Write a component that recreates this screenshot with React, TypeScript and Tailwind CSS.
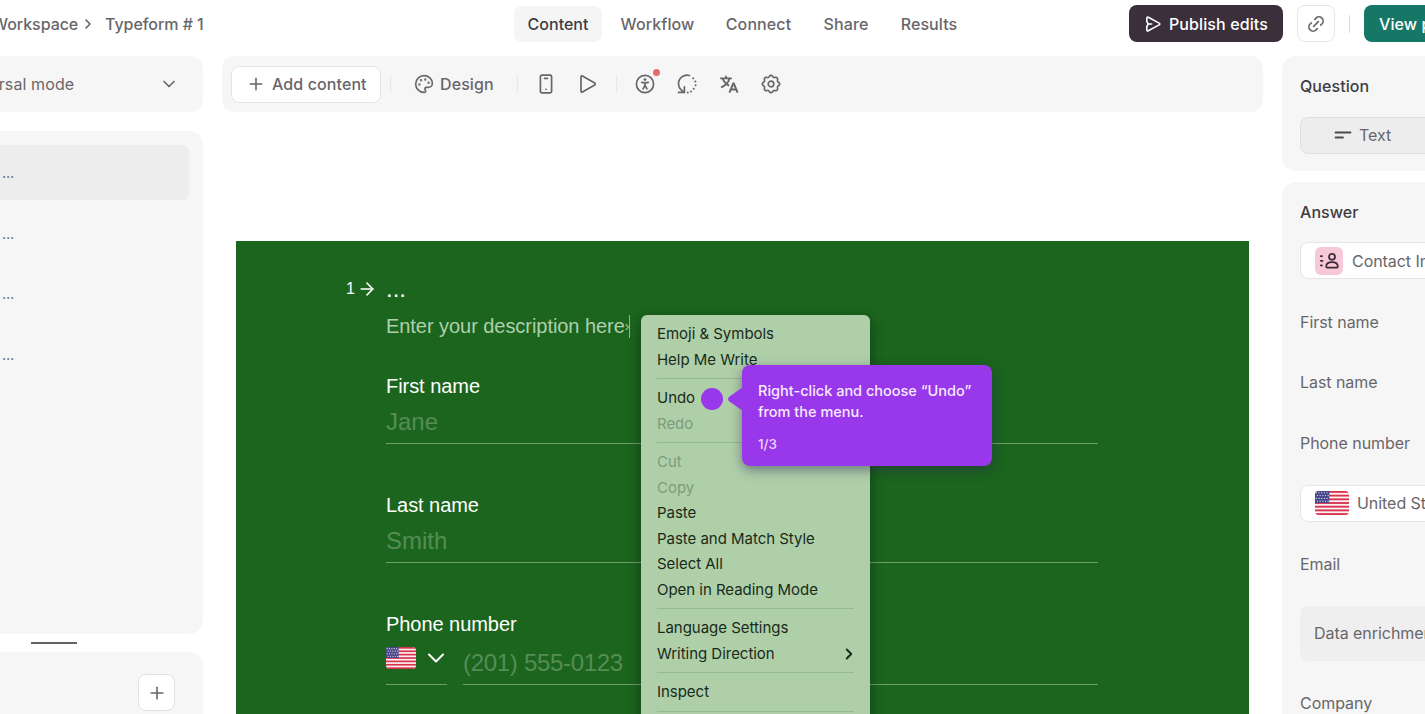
import type { ReactNode } from "react";
import { ArrowRight, ChevronDown, ChevronRight, Link2, Palette, Plus } from "lucide-react";
import { clsx } from "clsx";

const tabs = [
  { label: "Content", cls: "w-[88px]" },
  { label: "Workflow", cls: "w-[111px]" },
  { label: "Connect", cls: "w-[91px]" },
  { label: "Share", cls: "w-[84px]" },
  { label: "Results", cls: "w-[82px]" },
];

const menuGroups = [
  [{ label: "Emoji & Symbols" }, { label: "Help Me Write" }],
  [{ label: "Undo" }, { label: "Redo", disabled: true }],
  [
    { label: "Cut", disabled: true },
    { label: "Copy", disabled: true },
    { label: "Paste" },
    { label: "Paste and Match Style" },
    { label: "Select All" },
    { label: "Open in Reading Mode" },
  ],
  [{ label: "Language Settings" }, { label: "Writing Direction", submenu: true }],
  [{ label: "Inspect" }],
  [],
];

// eight soft lobes around the hub
const gearPoints = Array.from({ length: 96 }, (_, i) => {
  const a = (i / 96) * Math.PI * 2;
  const r = 7.9 + 0.8 * Math.cos(8 * a);
  return `${(10 + r * Math.cos(a)).toFixed(2)},${(10 + r * Math.sin(a)).toFixed(2)}`;
}).join(" ");

function Flag({ className }: { className?: string }) {
  const stripes = [0, 2, 4, 6, 8, 10, 12];
  const stars = [1.5, 4.5, 7.5, 10.5, 13.5];
  return (
    <svg viewBox="0 0 38 26" preserveAspectRatio="none" className={clsx("rounded-[4px] shrink-0", className)}>
      <rect width="38" height="26" fill="#fbf1f2" />
      {stripes.map((s) => (
        <rect key={s} y={s * 2} width="38" height="2" fill="#d8324c" />
      ))}
      <rect width="16" height="13" fill="#45458c" />
      {[2, 5, 8, 11].map((y, row) =>
        stars.map((x) => <circle key={`${x}-${y}`} cx={x + (row % 2) * 1.2} cy={y} r="0.75" fill="#e6e4f2" />)
      )}
    </svg>
  );
}

function SendIcon() {
  return (
    <svg viewBox="0 0 16 16" className="w-4 h-4" fill="none" stroke="currentColor" strokeWidth="1.6" strokeLinejoin="round" strokeLinecap="round">
      <path d="M1.8 2.1c0-.8.8-1.3 1.5-.9l10.900 5.900c.8.4.8 1.400 0 1.800L3.300 14.800c-.7.4-1.500-.1-1.500-.9V10.400L3.300 8 1.800 5.600z" />
      <path d="M3.500 8h3.200" />
    </svg>
  );
}

function PhoneIcon() {
  return (
    <svg viewBox="0 0 14 20" className="w-[14px] h-5" fill="none" stroke="currentColor" strokeWidth="1.7" strokeLinecap="round">
      <rect x="1.4" y="1.2" width="11.2" height="17.6" rx="1.6" />
      <path d="M5.600 4.400h2.800M7 15.300h.01" />
    </svg>
  );
}

function PlayIcon() {
  return (
    <svg viewBox="0 0 18 20" className="w-[18px] h-5" fill="none" stroke="currentColor" strokeWidth="1.7" strokeLinejoin="round">
      <path d="M2 2.700c0-.8.8-1.200 1.500-.8l12.200 7.200c.7.4.7 1.400 0 1.800L3.500 18.100c-.7.4-1.500 0-1.500-.8z" />
    </svg>
  );
}

function AccessibilityIcon() {
  return (
    <svg viewBox="0 0 20 20" className="w-5 h-5" fill="none" stroke="currentColor" strokeWidth="1.7" strokeLinecap="round" strokeLinejoin="round">
      <circle cx="10" cy="10" r="8.6" />
      <circle cx="10" cy="5.600" r="1.400" fill="currentColor" stroke="none" />
      <path d="M6.800 8.300l3.200.6 3.200-.6M10 8.800v2.500M10 11.200l-1.900 3.600M10 11.200l1.900 3.600" />
    </svg>
  );
}

function RotateDotsIcon() {
  return (
    <svg viewBox="0 0 20 20" className="w-5 h-5" fill="none" stroke="currentColor" strokeWidth="1.7" strokeLinecap="round" strokeLinejoin="round">
      <path d="M12.500 1.500A8.500 8.500 0 0 0 1.500 9.700c0 3.300 1.700 6 5.500 8.300" />
      <path d="M1.500 18.400H7.400V12.800" />
      <path strokeWidth="2" d="M16.200 4.200h.01M18.300 7.400h.01M18.600 11.200h.01M16.700 14.800h.01M14 17.400h.01M10.800 18.500h.01" />
    </svg>
  );
}

function TranslateIcon() {
  return (
    <svg viewBox="0 0 20 20" className="w-5 h-5" fill="none" stroke="currentColor" strokeWidth="1.8">
      <path d="M1.200 4.400h11.600M7 1.800v2.600M10.600 4.400C9.600 8 6.600 11.400 2 13.400M3.600 4.400c1.200 3.400 3.600 5.900 6.600 7.400" />
      <path strokeWidth="2" strokeLinejoin="bevel" d="M10.400 18.600l4.100-9.800 4.100 9.800M11.800 15.600h5.400" />
    </svg>
  );
}

function GearIcon() {
  return (
    <svg viewBox="0 0 20 20" className="w-5 h-5" fill="none" stroke="currentColor" strokeWidth="1.700" strokeLinejoin="round">
      <polygon points={gearPoints} />
      <circle cx="10" cy="10" r="2.800" />
    </svg>
  );
}

function ContactIcon() {
  return (
    <svg viewBox="0 0 20 18" className="w-5 h-[18px]" fill="none" stroke="#3c2b38" strokeWidth="1.7" strokeLinecap="round" strokeLinejoin="round">
      <circle cx="13" cy="4.800" r="3" />
      <path d="M7.200 14.800c0-3 2.400-4.600 5.800-4.600s5.800 1.600 5.800 4.600c0 .6-.4.9-.9.9H8.100c-.5 0-.9-.3-.9-.9z" />
      <path d="M1.800 4.200h1.200M1.800 8.800h1.800M1.800 13.400h1.200" />
    </svg>
  );
}

function Divider() {
  return <div className="w-px h-[18px] bg-[#e7e7e8]" />;
}

function Header() {
  return (
    <header className="flex items-center h-14 pb-[9px] shrink-0 text-[16px] font-[450] tracking-[0.1px] text-[#68666a]">
      <div className="w-[514px] shrink-0 flex items-center whitespace-nowrap tracking-[-0.05px]">
        <span className="w-[84px] -ml-[8px]">Workspace</span>
        <ChevronRight className="w-4 h-4 ml-[4px] mr-[9px]" strokeWidth={2.600} />
        <span>Typeform # 1</span>
      </div>
      <nav className="w-[615px] shrink-0 flex items-center">
        {tabs.map((tab, i) => (
          <button
            key={tab.label}
            className={clsx(
              "h-9 rounded-lg text-center whitespace-nowrap",
              tab.cls,
              i === 0 && "bg-[#f5f5f6] text-[#3f3d42] font-medium tracking-normal"
            )}
          >
            {tab.label}
          </button>
        ))}
      </nav>
      <button className="w-[154px] h-[37px] shrink-0 rounded-lg bg-[#3b2f3b] text-white flex items-center pl-[16px] gap-[8px] font-medium whitespace-nowrap">
        <SendIcon />
        Publish edits
      </button>
      <button className="w-[38px] h-[37px] ml-[14px] shrink-0 rounded-lg border border-[#e5e5e6] flex items-center justify-center">
        <Link2 className="w-5 h-5 -rotate-45" strokeWidth={2} />
      </button>
      <div className="w-px h-[18px] bg-[#dcdcdd] ml-[14px] mr-[14px] shrink-0" />
      <button className="w-[130px] h-[37px] shrink-0 rounded-lg bg-[#177767] text-white text-left pl-[15px] font-medium whitespace-nowrap">
        View published
      </button>
    </header>
  );
}

function Sidebar() {
  return (
    <aside className="w-[203px] shrink-0 flex flex-col text-[#68666a]">
      <div className="h-14 shrink-0 rounded-r-[12px] bg-[#f6f6f7] flex items-center justify-between pr-[24px] overflow-hidden">
        <span className="-ml-[45px] text-[16px] tracking-[0.1px]">Universal mode</span>
        <ChevronDown className="w-5 h-5" strokeWidth={2} />
      </div>
      <div className="h-[503px] mt-[19px] shrink-0 rounded-r-[14px] bg-[#f6f6f7] pt-[14px] pr-[14px] text-[14px] text-[#4c4a4f]">
        {[0, 1, 2, 3].map((row) => (
          <div key={row} className={clsx("h-[55px] mb-[5.5px] rounded-r-[7px] pl-[2px] pt-[18px] leading-5", row === 0 && "bg-[#ededed]")}>
            …
          </div>
        ))}
      </div>
      <div className="w-[46px] h-[2px] ml-[31px] mt-[8px] mb-[8px] shrink-0 bg-[#636164]" />
      <div className="h-[80px] shrink-0 rounded-tr-[14px] bg-[#f6f6f7] flex justify-end items-start pt-[22px] pr-[28px]">
        <button className="w-[37px] h-[37px] rounded-lg border border-[#e2e2e3] bg-white flex items-center justify-center">
          <Plus className="w-5 h-5" strokeWidth={1.9} />
        </button>
      </div>
    </aside>
  );
}

function Toolbar() {
  return (
    <div className="h-14 shrink-0 rounded-[12px] bg-[#f6f6f7] flex items-center pl-[9px] text-[16px] font-[450] text-[#68666a]">
      <button className="w-[150px] h-[37px] rounded-lg border border-[#e5e5e6] bg-white flex items-center pl-[14px] gap-[6px] whitespace-nowrap">
        <Plus className="w-5 h-5" strokeWidth={1.9} />
        <span className="tracking-[0.1px]">Add content</span>
      </button>
      <div className="flex items-center ml-[9px]">
        <Divider />
        <button className="w-[80px] ml-[23px] mr-[23px] flex items-center gap-[6px] tracking-[0.1px]">
          <Palette className="w-5 h-5 shrink-0" strokeWidth={2} />
          Design
        </button>
        <Divider />
        <div className="flex items-center ml-[21px] mr-[19px] gap-[26px]">
          <PhoneIcon />
          <PlayIcon />
        </div>
        <Divider />
        <div className="flex items-center ml-[18px] gap-[22px]">
          <div className="relative">
            <AccessibilityIcon />
            <span className="absolute left-[18px] -top-[5px] w-[7px] h-[7px] rounded-full bg-[#e06c6e]" />
          </div>
          <RotateDotsIcon />
          <TranslateIcon />
          <GearIcon />
        </div>
      </div>
    </div>
  );
}

function Field({ label, placeholder, className }: { label: string; placeholder: string; className?: string }) {
  return (
    <div className={className}>
      <div className="h-6 text-[20px] leading-6 tracking-[-0.05px] text-white">{label}</div>
      <div className="h-[46px] border-b border-[#6da06f] pt-[9px] text-[24px] leading-[30px] text-[#558d55]">{placeholder}</div>
    </div>
  );
}

function ContextMenu() {
  return (
    <div className="absolute left-[405px] top-[74px] w-[229px] h-[440px] rounded-t-[6px] bg-[#afcfa9] px-4 pt-[6.4px] shadow-[0_4px_14px_rgba(0,0,0,0.4)] font-['Inter',sans-serif] text-[15px] tracking-[-0.03px] text-[#182b1a]">
      {menuGroups.map((group, i) => (
        <div key={i}>
          {i > 0 && (
            <div className="h-[12.8px] flex items-center">
              <div className="w-full h-px -mt-px bg-[#96b892]" />
            </div>
          )}
          {group.map((item: { label: string; disabled?: boolean; submenu?: boolean }) => (
            <div
              key={item.label}
              className={clsx("h-[25.6px] flex items-center justify-between whitespace-nowrap", item.disabled && "text-[#7d9d7a]")}
            >
              {item.label}
              {item.submenu && <ChevronRight className="w-[18px] h-[18px] -mr-[4px]" strokeWidth={2.600} />}
            </div>
          ))}
        </div>
      ))}
    </div>
  );
}

function Tooltip() {
  return (
    <>
      <div className="absolute left-[465px] top-[147px] w-[22px] h-[22px] rounded-full bg-[#9937eb]" />
      <div className="absolute left-[506px] top-[124px] w-[250px] h-[101px] rounded-[8px] bg-[#9937eb] pl-4 pt-[15px] text-[#f6eafe] font-['Inter',sans-serif] text-[14.5px] font-medium leading-[21px] shadow-[0_4px_12px_rgba(40,40,80,0.5)]">
        <svg viewBox="0 0 15 24" className="absolute -left-[14px] top-[22px] w-[15px] h-6" fill="#9937eb">
          <path d="M15 0v24L1.200 14.200c-1.500-1.200-1.500-3.200 0-4.400z" />
        </svg>
        <p className="whitespace-nowrap">
          Right-click and choose “Undo”
          <br />
          from the menu.
        </p>
        <p className="mt-[12px] text-[13.5px] text-[#ead4fb]">1/3</p>
      </div>
    </>
  );
}

function Canvas() {
  return (
    <div className="relative h-[480px] w-[1013px] mt-[129px] ml-[14px] shrink-0 bg-[#1b651e] pt-[31px] font-['Liberation_Sans',Arial,sans-serif]">
      <div className="flex h-[34px] text-white">
        <div className="w-[150px] flex items-center justify-end gap-[2px] pr-[9px] text-[16px]">
          1
          <ArrowRight className="w-5 h-5" strokeWidth={1.9} />
        </div>
        <span className="text-[24px] leading-[34px]">...</span>
      </div>
      <div className="ml-[150px] w-[712px]">
        <div className="flex items-center h-[41px] text-[20px] text-[#afcfac]">
          <span className="whitespace-nowrap tracking-[-0.05px] -mt-px">Enter your description here</span>
          <span className="text-[14px]">›</span>
          <span className="w-px h-[23px] bg-[#8fb98f]" />
        </div>
        <Field label="First name" placeholder="Jane" className="mt-[27px]" />
        <Field label="Last name" placeholder="Smith" className="mt-[49px]" />
        <div className="mt-[49px] h-6 text-[20px] leading-6 tracking-[-0.05px] text-white">Phone number</div>
        <div className="flex gap-[16px] h-[49px]">
          <div className="w-[61px] border-b border-[#6da06f] flex items-start pt-[11px] gap-[6px] text-white">
            <Flag className="w-[30px] h-[22px]" />
            <ChevronDown className="w-[28px] h-[28px] -mr-[3px] -mt-[3px] shrink-0" strokeWidth={1.7} />
          </div>
          <div className="flex-1 border-b border-[#6da06f] pt-[12px] text-[24px] leading-[30px] tracking-[-0.3px] text-[#558d55]">
            (201) 555-0123
          </div>
        </div>
      </div>
      <ContextMenu />
      <Tooltip />
    </div>
  );
}

function PanelTitle({ children }: { children: ReactNode }) {
  return <h3 className="h-[61px] pt-[19px] leading-[22px] font-[550] tracking-[0.05px] text-[#3f3d42]">{children}</h3>;
}

function SettingsPanel() {
  return (
    <aside className="w-[143px] shrink-0 flex flex-col overflow-hidden text-[16px] tracking-[-0.05px] text-[#68666a] whitespace-nowrap">
      <section className="h-[115px] shrink-0 rounded-l-[14px] bg-[#f6f6f7] pl-[18px]">
        <PanelTitle>Question</PanelTitle>
        <div className="h-[37px] w-[160px] rounded-l-lg border border-[#dfdfe1] bg-[#ededee] flex items-center pb-px pl-[33px] gap-[7px]">
          <svg viewBox="0 0 18 8" className="w-[18px] h-2" fill="none" stroke="#4c4a4f" strokeWidth="1.8" strokeLinecap="round">
            <path d="M1.500 1.500h15M1.500 6.500h7.500" />
          </svg>
          Text
        </div>
      </section>
      <section className="h-[560px] mt-[11px] shrink-0 rounded-tl-[14px] bg-[#f6f6f7] pl-[18px]">
        <PanelTitle>Answer</PanelTitle>
        <div className="-mt-px h-[37px] w-[160px] rounded-l-lg border border-[#e5e5e6] bg-white flex items-center pl-[14px] gap-[9px]">
          <span className="w-7 h-7 shrink-0 rounded-md bg-[#f7c8d7] flex items-center justify-center">
            <ContactIcon />
          </span>
          Contact Info
        </div>
        <div className="mt-[12.5px]">
          {["First name", "Last name", "Phone number"].map((label) => (
            <div key={label} className="h-[60.5px] flex items-center">
              {label}
            </div>
          ))}
        </div>
        <div className="mt-[11.5px] h-[37px] w-[160px] rounded-l-lg border border-[#e5e5e6] bg-white flex items-center pl-[14px] gap-[8px]">
          <Flag className="w-[34px] h-6" />
          United States
        </div>
        <div className="mt-[12px] h-[60px] flex items-center">Email</div>
        <div className="mt-[12px] h-[55px] w-[160px] rounded-l-lg bg-[#efeff0] flex items-center pl-[14px]">Data enrichment</div>
        <div className="mt-[12px] h-[60px] flex items-center">Company</div>
      </section>
    </aside>
  );
}

export default function App() {
  return (
    <div className="w-full h-[714px] overflow-hidden flex flex-col bg-white font-['Inter',sans-serif]">
      <Header />
      <div className="flex flex-1 min-h-0">
        <Sidebar />
        <main className="w-[1041px] ml-[19px] mr-[19px] shrink-0 flex flex-col">
          <Toolbar />
          <Canvas />
        </main>
        <SettingsPanel />
      </div>
    </div>
  );
}
